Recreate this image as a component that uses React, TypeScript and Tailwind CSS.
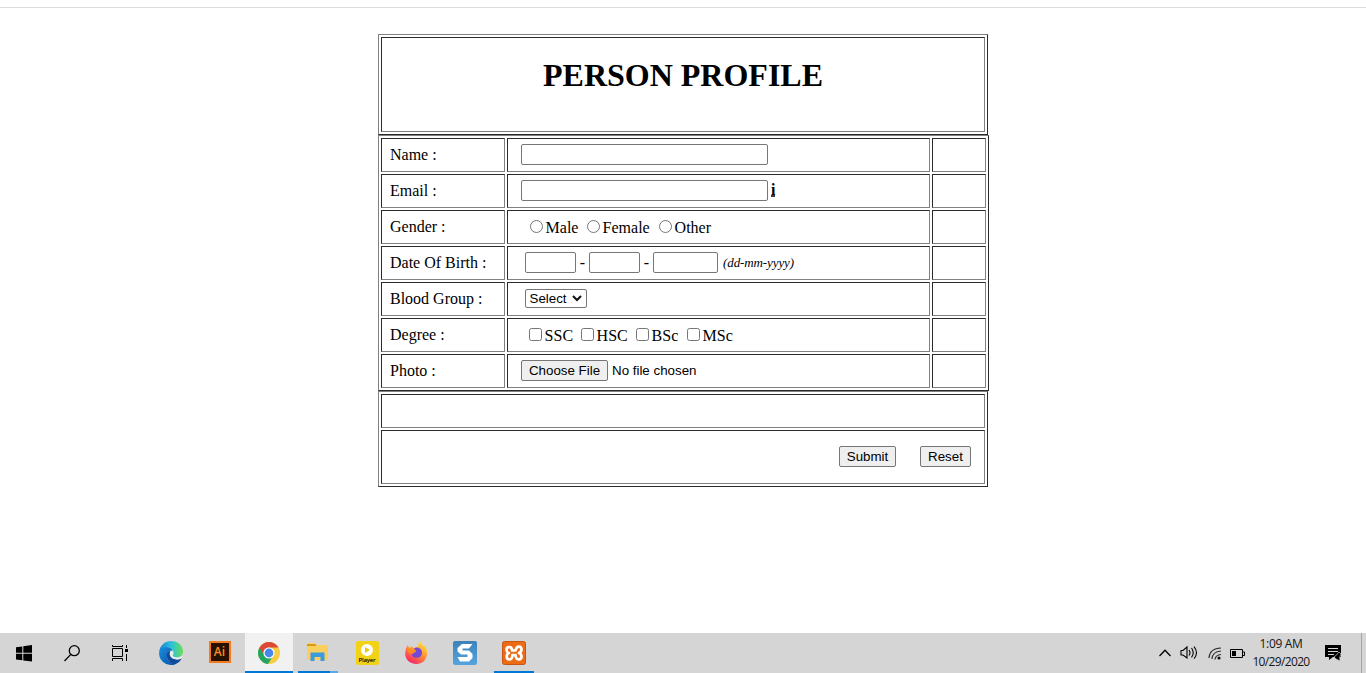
import React, { ReactNode } from 'react';

const cell = 'shrink-0 border border-t-[#2b2b2b] border-l-[#2b2b2b] border-b-[#808080] border-r-[#808080]';
const table = 'flex flex-col gap-[2px] p-[2px] border border-t-[#808080] border-l-[#808080] border-b-[#2b2b2b] border-r-[#2b2b2b]';
const input = 'block h-[21px] shrink-0 rounded-[2px] border border-[#767676] bg-white px-[2px] outline-none';
const button = 'h-[21px] shrink-0 rounded-[2px] border border-[#767676] bg-[#efefef] text-center font-["Liberation_Sans",Arial,sans-serif] text-[13.333px] leading-[19px] whitespace-nowrap';

function Row({ label, children }: { label: string; children: ReactNode }) {
  return (
    <div className="flex h-[34px] gap-[2px]">
      <div className={`${cell} w-[124px] pl-[8px] text-[16px] leading-[32px]`}>{label}</div>
      <div className={`${cell} flex w-[423px] items-start pl-[13px] pt-[5px]`}>{children}</div>
      <div className={`${cell} w-[54px]`} />
    </div>
  );
}

function Choice({ type, label, width }: { type: 'radio' | 'checkbox'; label: string; width: string }) {
  return (
    <label className={`flex shrink-0 whitespace-nowrap text-[16px] leading-[24px] ${width}`}>
      <input type={type} name={type} className="m-0 mr-[2.6px] mt-[4px] block h-[13px] w-[13px] shrink-0" />
      {label}
    </label>
  );
}

function Taskbar() {
  return (
    <footer className="flex h-[40px] w-full bg-[#d5d5d5] font-['Open_Sans','Noto_Sans',sans-serif] text-black">
      <div className="flex h-full w-[48px] items-center justify-center">
        <svg width="16" height="17" viewBox="0 0 16 17"><path d="M0 2.3 6.3 1.4V7.8H0ZM7.3 1.2 16 0V7.8H7.3ZM0 8.8H6.3V15.3L0 14.4ZM7.3 8.8H16V16.5L7.3 15.4Z" /></svg>
      </div>
      <div className="flex h-full w-[48px] items-center justify-center">
        <svg width="16" height="17" viewBox="0 0 16 17" fill="none" stroke="#000" strokeWidth="1.3"><circle cx="10.3" cy="5.7" r="5" /><path d="M6.8 9.4.5 16" /></svg>
      </div>
      <div className="flex h-full w-[48px] items-center justify-center">
        <svg width="16" height="16" viewBox="0 0 16 16" fill="none" stroke="#000"><path d="M.5 0V1.5H10.5V0M.5 16V13.5H10.5V16M.5 3.5H10.5V11.5H.5ZM14.5 0V3M14.5 9V16" /><path d="M13 4H16V7H13Z" fill="#000" stroke="none" /></svg>
      </div>
      <div className="flex h-full w-[53px] items-center justify-center">
        <svg width="24" height="24" viewBox="0 0 24 24">
          <defs>
            <linearGradient id="edgeTop"><stop offset="0" stopColor="#1681cf" /><stop offset=".5" stopColor="#2cc1df" /><stop offset="1" stopColor="#67df54" /></linearGradient>
            <linearGradient id="edgeSide" x2="1" y2="1"><stop stopColor="#1b8ddb" /><stop offset="1" stopColor="#0753ad" /></linearGradient>
          </defs>
          <path d="M.2 11C.8 4.7 5.8 0 12.2 0 19 0 24 4.7 24 10.4c0 3.7-2.8 6-6 6-3 0-5-1-4.2-2.4 2-2.5.3-5.6-3.4-5.7C6 7.5 1.7 8 .2 11Z" fill="url(#edgeTop)" />
          <path d="M.1 12C.5 7.8 4 5.7 8 6.3c3 .3 5.3 2 5.5 4-3-1.6-6 1.2-5.6 4.7.4 4.5 4 8 8 8.4C8 26-.3 20 .1 12Z" fill="url(#edgeSide)" />
          <path d="M11.4 9.7C8.5 10 7 13 8 16.4c1.2 4.2 4.8 7 8 7 3-1.2 5.4-3.4 6.8-6.2-4.8 2.6-10.5.8-11.5-3.4-.4-1.6-.4-2.8.1-4.1Z" fill="#12499b" />
          <path d="M12.4 9.8c2 .8 2.3 2.6 1.4 4-.8 1.4 1.6 2.8 4.2 2.8 2 0 3.8-.6 5-1.6l.5.8-1.2 1.8c-5 2.2-11.3.2-11.6-4.3-.1-1.6.5-3 1.7-3.5Z" fill="#e6edf0" />
        </svg>
      </div>
      <div className="flex h-full w-[46px] items-center justify-center pb-[2px] pr-[1px]">
        <div className="flex h-[22px] w-[22px] items-center justify-center border-2 border-[#f47a20] bg-[#291100] text-[12px] font-semibold text-[#ff8c26]">Ai</div>
      </div>
      <div className="mx-[2px] flex h-full w-[48px] flex-col items-center border-b-2 border-[#0078d7] bg-[#f1f1f1] pt-[8px]">
        <svg width="24" height="24" viewBox="0 0 24 24"><circle cx="12" cy="12" r="11" fill="#f5cc43" /><path d="M12 12 2.5 6.5A11 11 0 0 0 11 23L16.7 14Z" fill="#22a463" /><path d="M2.5 6.5A11 11 0 0 1 21.5 6.5H12C8 6.5 6.8 10 7.2 14Z" fill="#dc4938" /><circle cx="12" cy="12" r="5.6" fill="#fff" /><circle cx="12" cy="12" r="4.4" fill="#4688ed" /></svg>
      </div>
      <div className="ml-[3px] flex h-full w-[40px] flex-col items-center pt-[10px]">
        <svg className="mr-[2px]" width="22" height="19" viewBox="0 0 22 19"><path d="M1 1Q1 0 2 0H9L11 2H21Q22 2 22 3V17H1Z" fill="#f9cf60" /><path d="M1 1H9L11 3H1Z" fill="#d99a15" /><path d="M4.5 9.5H18.5V18H14.5V14H8.5V18H4.5Z" fill="#3b9be1" /></svg>
        <div className="mt-[9px] flex h-[2px] w-full"><span className="w-[32px] bg-[#0078d7]" /><span className="w-[8px] bg-[#5ca9e7]" /></div>
      </div>
      <div className="ml-[5px] flex h-full w-[48px] items-center justify-center">
        <div className="flex h-[24px] w-[23px] flex-col items-center rounded-[2px] bg-[#f2d216] pt-[3px]">
          <svg width="12" height="12" viewBox="0 0 12 12"><circle cx="6" cy="6" r="6" fill="#fff" /><path d="M4 3 9 6 4 9Z" fill="#e9c90e" /></svg>
          <span className="text-[6px] font-semibold leading-[8px] tracking-[-0.2px]">Player</span>
        </div>
      </div>
      <div className="ml-px flex h-full w-[48px] items-center justify-center">
        <svg width="24" height="24" viewBox="0 0 24 24">
          <defs><linearGradient id="fox" x1=".8" y1="0" x2=".2" y2="1"><stop stopColor="#ffe83c" /><stop offset=".45" stopColor="#ff9732" /><stop offset="1" stopColor="#f5156c" /></linearGradient></defs>
          <path d="M3.5 4 5.4 7 8 5.3 9.2 7.2Q12 5.8 14 6 14 2.5 16 0 18 2 18.8 5L20.5 4.5Q23.5 8 23 13.5C22.4 19.5 18 23 12.4 23 6 23 1.2 18.6 1.2 12.6Q1.1 8 3.5 4Z" fill="url(#fox)" />
          <path d="M10 7.6Q14 5 17 8.4c2.2 3 .8 8-3.6 8.4-3.4.4-6-1.8-5.6-4l4-1.8Z" fill="#7549d6" /><path d="M3.5 6.8 9 8 12.5 9.5 10 11.2 8.3 13.2Q5 13 3.5 10Z" fill="#ff8b22" />
        </svg>
      </div>
      <div className="ml-px flex h-full w-[48px] items-center justify-center">
        <svg width="24" height="24" viewBox="0 0 24 24"><defs><linearGradient id="snag" x2="0" y2="1"><stop stopColor="#3b82b9" /><stop offset="1" stopColor="#55a3dd" /></linearGradient></defs><rect width="24" height="24" rx="2" fill="url(#snag)" /><path d="M19.5 3H9L4.5 7V10.5L8 13.5H14.5V16H4.5L7 20.5H16L19.5 17V13L16 9.5H9.5V7.5H16Z" fill="#fff" /></svg>
      </div>
      <div className="ml-[5px] flex h-full w-[40px] flex-col items-center border-b-2 border-[#0078d7] pt-[8px]">
        <svg width="24" height="24" viewBox="0 0 24 24"><rect x=".5" y=".5" width="23" height="23" rx="2" fill="#ec6c16" stroke="#c95515" /><path d="M10 8.5C9.2 5 4.3 5.5 4.6 9 4.7 10.6 6 12 7 12 4 13 3.8 18 7.3 18.4 9.6 18.7 10.3 16.8 10.4 14H13.5C13.7 17 14.7 18.5 17 18.3 20.5 18 20.1 13 17 12 20.6 10.5 20.1 5.4 16.7 5.6 14.6 5.7 14 7.5 13.5 9.5H10Z" fill="none" stroke="#fff" strokeWidth="2.7" strokeLinejoin="round" /></svg>
      </div>
      <div className="ml-auto flex h-full items-center">
        <svg className="mr-[9px]" width="12" height="8" viewBox="0 0 12 8" fill="none" stroke="#000" strokeWidth="1.3"><path d="M.5 7 6 1.3 11.5 7" /></svg>
        <svg className="mr-[10px]" width="18" height="16" viewBox="0 0 18 16" fill="none" stroke="#000" strokeWidth="1.1"><path d="M1 5.5H3L7 2V13L3 10H1ZM9 5Q11 7.7 9 10.5M11.5 3Q15 7.7 11.5 12.3M14 1.7Q19 7.7 14 13.7" /></svg>
        <svg className="mr-[8px]" width="14" height="15" viewBox="0 0 14 15" fill="none" stroke="#333" strokeWidth="1.2"><path d="M1 12Q1.5 2.5 13 2M4 13Q4.5 5.5 13 5M7 13.5Q7.5 9 13 8.5" /><circle cx="11" cy="12" r="1.6" fill="#111" stroke="none" /></svg>
        <svg className="mr-[6px]" width="15" height="9" viewBox="0 0 15 9"><path d="M.5.5H12.5V8.5H.5ZM13 3H14.5V6.5H13" fill="none" stroke="#000" /><path d="M2 2H6V7H2Z" /></svg>
        <div className="flex w-[60px] flex-col items-center whitespace-nowrap text-[12px] leading-[18px] text-[#161616]"><div className="tracking-[-0.35px]">1:09 AM</div><div className="tracking-[-0.65px]">10/29/2020</div></div>
        <svg className="ml-[14px] mr-[19px]" width="17" height="17" viewBox="0 0 17 17"><path d="M0 0H16V12H8L4 15V12H0Z" /><path d="M3 3.5H13M3 6.5H13M3 9.5H9" stroke="#d5d5d5" /><path d="M9 12Q12 10 14 7L16 9Q14 12 15 16L11 14Z" fill="#000" stroke="#d5d5d5" strokeWidth=".7" /></svg>
        <div className="h-full w-[5px] border-l border-[#a5a5a5]" />
      </div>
    </footer>
  );
}

export default function App() {
  return (
    <div className="flex h-[673px] w-full flex-col overflow-hidden bg-white pt-[7px] font-['Liberation_Serif','Times_New_Roman',serif] text-black">
      <div className="h-px w-full shrink-0 bg-[#dcdcdc]" />
      <main className="ml-[378px] mt-[26px] flex grow flex-col items-start">
        <section className={`${table} h-[101px] w-[610px]`}>
          <div className={`${cell} h-[95px] pt-[19px]`}><h1 className="text-center text-[32px] font-bold leading-[37px]">PERSON PROFILE</h1></div>
        </section>
        <form className={`${table} h-[256px] w-[611px]`}>
          <Row label="Name :"><input aria-label="Name" className={`${input} w-[247px]`} /></Row>
          <Row label="Email :">
            <input aria-label="Email" className={`${input} w-[247px]`} />
            <b className="ml-[3px] h-[17px] border-b-2 border-[#3c3c3c] text-[16px] leading-[20px]">i</b>
          </Row>
          <Row label="Gender :">
            <div className="flex pl-[9px]"><Choice type="radio" label="Male" width="w-[57px]" /><Choice type="radio" label="Female" width="w-[72px]" /><Choice type="radio" label="Other" width="w-[60px]" /></div>
          </Row>
          <Row label="Date Of Birth :">
            <input aria-label="Day" className={`${input} ml-[4px] w-[51px]`} />
            <span className="w-[13px] text-center text-[16px] leading-[22px]">-</span>
            <input aria-label="Month" className={`${input} w-[51px]`} />
            <span className="w-[13px] text-center text-[16px] leading-[22px]">-</span>
            <input aria-label="Year" className={`${input} w-[65px]`} />
            <i className="ml-[5px] text-[13px] leading-[22px] tracking-[-0.1px]">(dd-mm-yyyy)</i>
          </Row>
          <Row label="Blood Group :">
            <div className="relative ml-[4px] mt-px h-[19px] w-[62px]">
              <select aria-label="Blood group" className="block h-[19px] w-[62px] appearance-none rounded-[2px] border border-[#767676] bg-white pl-[3.5px] font-['Liberation_Sans',Arial,sans-serif] text-[13.333px] leading-[17px]"><option>Select</option></select>
              <svg className="pointer-events-none absolute right-[5px] top-[6px]" width="10" height="7" viewBox="0 0 10 7" fill="none" stroke="#111" strokeWidth="2"><path d="M1 1 5 5 9 1" /></svg>
            </div>
          </Row>
          <Row label="Degree :">
            <div className="flex pl-[8px]"><Choice type="checkbox" label="SSC" width="w-[52px]" /><Choice type="checkbox" label="HSC" width="w-[55px]" /><Choice type="checkbox" label="BSc" width="w-[51px]" /><Choice type="checkbox" label="MSc" width="w-[60px]" /></div>
          </Row>
          <Row label="Photo :">
            <button type="button" className={`${button} w-[87px]`}>Choose File</button>
            <span className="ml-[4px] font-['Liberation_Sans',Arial,sans-serif] text-[13.333px] leading-[21px]">No file chosen</span>
          </Row>
        </form>
        <section className={`${table} h-[96px] w-[610px]`}>
          <div className={`${cell} h-[34px]`} />
          <div className={`${cell} flex h-[54px] justify-end gap-[24px] pr-[13px] pt-[15px]`}>
            <button type="button" className={`${button} w-[57px]`}>Submit</button>
            <button type="button" className={`${button} w-[51px]`}>Reset</button>
          </div>
        </section>
      </main>
      <Taskbar />
    </div>
  );
}
